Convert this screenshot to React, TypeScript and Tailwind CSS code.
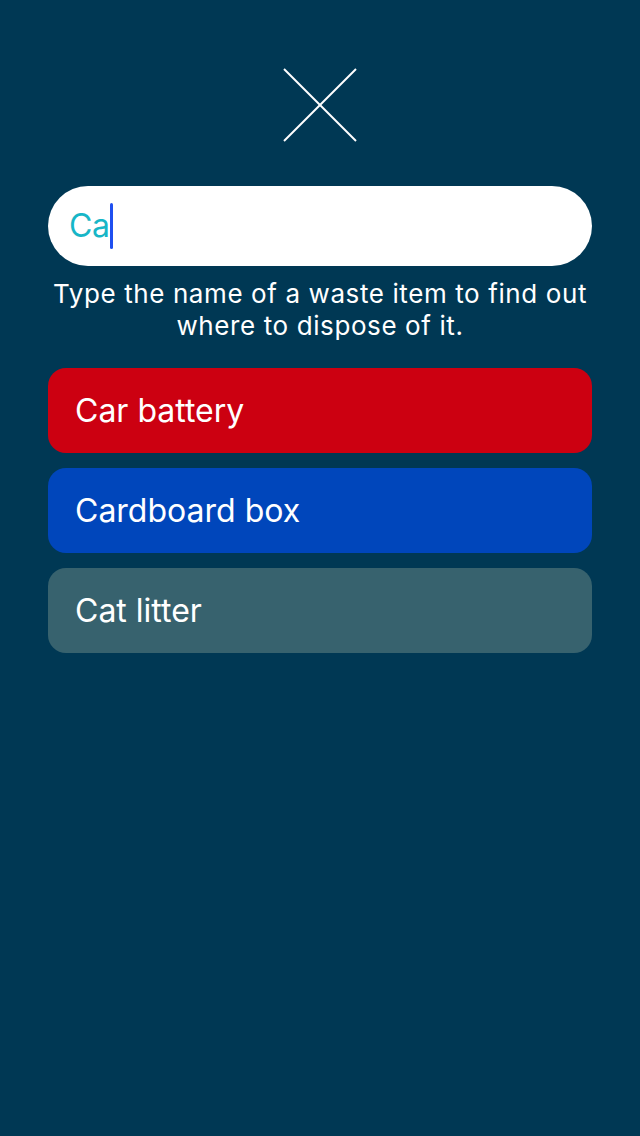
import React from "react";

export default function App() {
  const items = [
    { label: "Car battery", bg: "bg-[#cc0011]" },
    { label: "Cardboard box", bg: "bg-[#0046bb]" },
    { label: "Cat litter", bg: "bg-[#37626e]" },
  ];
  return (
    <div
      className="w-[640px] h-[1136px] bg-[#003854] flex flex-col items-center"
      style={{ fontFamily: "Inter, 'Noto Sans', sans-serif" }}
    >
      <div className="mt-[68px] w-[74px] h-[74px]">
        <svg width="74" height="74" viewBox="0 0 74 74">
          <line x1="1" y1="1" x2="73" y2="73" stroke="white" strokeWidth="2" />
          <line x1="73" y1="1" x2="1" y2="73" stroke="white" strokeWidth="2" />
        </svg>
      </div>
      <div className="mt-[44px] w-[544px] h-[80px] bg-white rounded-full flex items-center pl-[21px]">
        <span className="text-[32px] text-[#17b6c7] leading-none tracking-[-0.5px]">Ca</span>
        <span className="ml-[1px] w-[3px] h-[46px] rounded-full bg-[#1f4ff0]" />
      </div>
      <p className="mt-[12px] w-[560px] text-center text-white text-[26px] leading-[32px] tracking-[0.6px]">
        Type the name of a waste item to find out <br />where to dispose of it.
      </p>
      <div className="mt-[26px] w-[544px] flex flex-col gap-[15px]">
        {items.map((it) => (
          <div
            key={it.label}
            className={`${it.bg} h-[85px] rounded-[18px] flex items-center pl-[27px] text-white text-[32px]`}
          >
            {it.label}
          </div>
        ))}
      </div>
    </div>
  );
}
